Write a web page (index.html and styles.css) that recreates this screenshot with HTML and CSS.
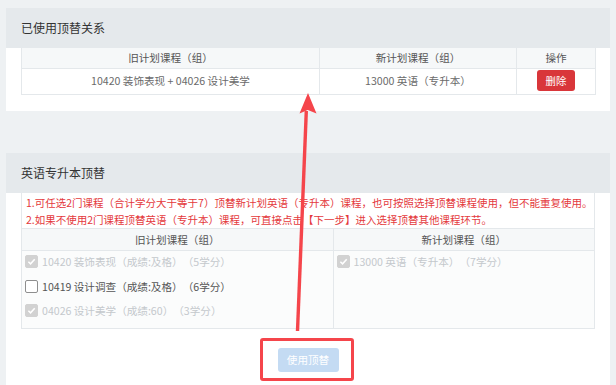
FILE: index.html
```html
<!DOCTYPE html>
<html lang="zh">
<head>
<meta charset="utf-8">
<link rel="stylesheet" href="styles.css">
</head>
<body>
<div class="page">
  <section class="panel panel-used">
    <div class="panel-head">已使用顶替关系</div>
    <div class="panel-body">
      <table class="tbl tbl-used">
        <colgroup><col class="c1"><col class="c2"><col class="c3"></colgroup>
        <thead>
          <tr><th>旧计划课程（组）</th><th>新计划课程（组）</th><th>操作</th></tr>
        </thead>
        <tbody>
          <tr>
            <td>10420 装饰表现 + 04026 设计美学</td>
            <td>13000 英语（专升本）</td>
            <td><button class="btn-del">删除</button></td>
          </tr>
        </tbody>
      </table>
    </div>
  </section>

  <section class="panel panel-sub">
    <div class="panel-head">英语专升本顶替</div>
    <div class="panel-body">
      <div class="sub-box">
        <div class="notice">
          <p>1.可任选2门课程（合计学分大于等于7）顶替新计划英语（专升本）课程，也可按照选择顶替课程使用，但不能重复使用。</p>
          <p>2.如果不使用2门课程顶替英语（专升本）课程，可直接点击【下一步】进入选择顶替其他课程环节。</p>
        </div>
        <table class="tbl tbl-sub">
          <colgroup><col class="s1"><col class="s2"></colgroup>
          <thead>
            <tr><th>旧计划课程（组）</th><th>新计划课程（组）</th></tr>
          </thead>
          <tbody>
            <tr>
              <td>
                <div class="opts">
                  <label class="opt disabled"><span class="cb checked"><svg viewBox="0 0 13 13"><path d="M2.8 6.8 L5.4 9.3 L10.3 3.8" fill="none" stroke="#fff" stroke-width="1.8"/></svg></span>10420 装饰表现（成绩:及格）（5学分）</label>
                  <label class="opt"><span class="cb"></span>10419 设计调查（成绩:及格）（6学分）</label>
                  <label class="opt disabled"><span class="cb checked"><svg viewBox="0 0 13 13"><path d="M2.8 6.8 L5.4 9.3 L10.3 3.8" fill="none" stroke="#fff" stroke-width="1.8"/></svg></span>04026 设计美学（成绩:60）（3学分）</label>
                </div>
              </td>
              <td>
                <div class="opts">
                  <label class="opt disabled"><span class="cb checked"><svg viewBox="0 0 13 13"><path d="M2.8 6.8 L5.4 9.3 L10.3 3.8" fill="none" stroke="#fff" stroke-width="1.8"/></svg></span>13000 英语（专升本）（7学分）</label>
                </div>
              </td>
            </tr>
          </tbody>
        </table>
      </div>
      <div class="actions">
        <button class="btn-use" disabled>使用顶替</button>
        <span class="highlight"></span>
      </div>
    </div>
  </section>
</div>

<svg class="annot" width="616" height="385" viewBox="0 0 616 385">
  <path d="M297.5 331 L306.3 111" stroke="#f5454b" stroke-width="3.4" fill="none"/>
  <path d="M308 93 L316.5 113.5 L307.8 110 L299.5 113.5 Z" fill="#f5454b"/>
</svg>
</body>
</html>
```

FILE: styles.css
```css
* { box-sizing: border-box; }
html, body { margin: 0; padding: 0; }
body {
  background: #eef1f3;
  font-family: "Noto Sans CJK SC", "Noto Sans", sans-serif;
  color: #555;
  width: 616px;
  height: 385px;
  overflow: hidden;
  position: relative;
  text-spacing-trim: space-all;
}
.page {
  padding: 8px 6px 0 6px;
}
.panel { background: #fff; }
.panel-sub { margin-top: 42px; height: 240px; }
.panel-head {
  height: 40px;
  background: #e5e9ec;
  color: #333;
  font-size: 12px;
  line-height: 40px;
  padding-left: 15px;
}
.panel-body { padding: 0 15px 16px 15px; }

.tbl {
  width: 574px;
  border-collapse: collapse;
  table-layout: fixed;
  font-size: 10.6px;
  color: #6a6a6a;
}
.tbl th, .tbl td {
  border: 1px solid #e4e8eb;
  text-align: center;
  font-weight: normal;
  padding: 0;
}
.tbl-used .c1 { width: 298px; }
.tbl-used .c2 { width: 197px; }
.tbl-used .c3 { width: 79px; }
.tbl-used thead tr { height: 20px; background: #f6f8f9; }
.tbl-used thead th { color: #555; border-top: none; }
.tbl-used tbody tr { height: 26px; }
.tbl-used tbody td { padding-bottom: 2px; }

.btn-del {
  width: 38px;
  height: 21px;
  border: none;
  border-radius: 3px;
  background: #d9363a;
  color: #fff;
  font-family: inherit;
  font-size: 10.4px;
  padding: 0;
  vertical-align: middle;
}

.sub-box {
  border: 1px solid #e4e8eb;
  border-top: none;
  width: 574px;
}
.notice {
  height: 36px;
  padding: 1px 4px 0 4px;
  color: #e4393c;
  font-size: 10.5px;
  line-height: 17.5px;
  border-bottom: 1px solid #e4e8eb;
  white-space: nowrap;
}
.notice p { margin: 0; }

.tbl-sub { width: 572px; }
.tbl-sub .s1 { width: 311px; }
.tbl-sub .s2 { width: 261px; }
.tbl-sub tr > :first-child { border-left: none; }
.tbl-sub tr > :last-child { border-right: none; }
.tbl-sub thead th { border-top: none; color: #555; }
.tbl-sub tbody td { border-bottom: none; vertical-align: top; text-align: left; }
.tbl-sub thead tr { height: 22px; background: #f6f8f9; }
.tbl-sub tbody tr { height: 77px; background: #fbfcfc; }

.opts { display: flex; flex-direction: column; padding: 0 0 0 3px; margin-top: -1.5px; }
.opt {
  display: flex;
  align-items: center;
  height: 24.5px;
  font-size: 10.6px;
  color: #555;
  white-space: nowrap;
}
.opt.disabled { color: #c4c8cc; }
.cb {
  width: 13px;
  height: 13px;
  border: 1px solid #8e8e8e;
  border-radius: 2px;
  background: #fff;
  margin-right: 4px;
  flex: none;
  display: inline-flex;
}
.cb.checked { background: #d2d2d2; border-color: #d2d2d2; }
.cb svg { width: 11px; height: 11px; }

.actions {
  position: relative;
  display: flex;
  justify-content: center;
  padding-top: 19px;
}
.btn-use {
  width: 61px;
  height: 24px;
  border: none;
  border-radius: 3px;
  background: #c4dbf3;
  color: #fff;
  font-family: inherit;
  font-size: 10.6px;
  padding: 0;
}
.highlight {
  position: absolute;
  left: 239px;
  top: 9px;
  width: 94px;
  height: 43px;
  border: 3.5px solid #f5454b;
  border-radius: 3px;
}
.annot {
  position: absolute;
  left: 0;
  top: 0;
  pointer-events: none;
}
```
